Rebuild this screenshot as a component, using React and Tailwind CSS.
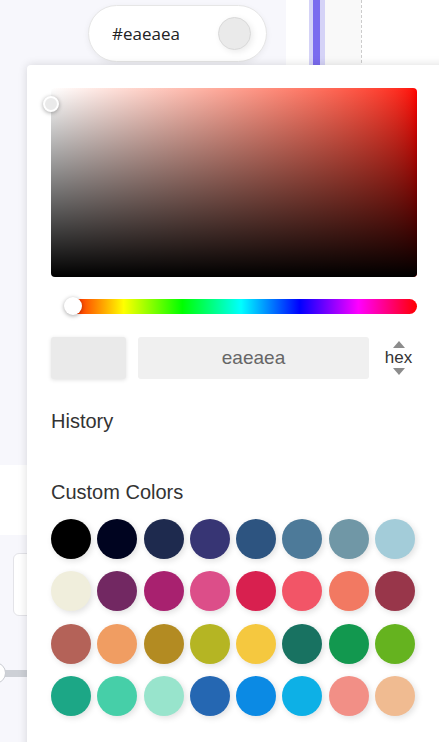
const SWATCHES = [
  '#000000', '#000420', '#1e2a4e', '#373574', '#2d5480', '#4d7a99', '#7097a6', '#a3ccd9',
  '#f0eedc', '#722862', '#a8216f', '#dc4e89', '#d8204f', '#f25567', '#f27962', '#98364a',
  '#b46258', '#f09d62', '#b38b22', '#b5b523', '#f5c83f', '#187261', '#12984f', '#65b31f',
  '#1ca786', '#46cfa8', '#98e4cc', '#2567b2', '#0b8ae4', '#0db0e6', '#f28f86', '#f0bb91',
]

function Backdrop() {
  return (
    <div className="flex h-full w-full">
      {/* settings column behind the picker */}
      <div className="flex w-[286px] flex-col bg-[#f7f7fc]">
        <div className="pl-[88px] pt-[5px]">
          <div className="flex h-[57px] w-[179px] items-center justify-between rounded-full border border-[#e6e6e6] bg-white pl-[23px] pr-[15px] shadow-[0_2px_6px_rgba(0,0,0,0.06)]">
            <span className="font-['Open_Sans'] text-[17px] text-[#222]">#eaeaea</span>
            <span className="h-[33px] w-[33px] rounded-full border border-[#d9d9d9] bg-[#eaeaea] shadow-[2px_2px_6px_rgba(0,0,0,0.08)]" />
          </div>
        </div>
        <div className="h-[403px]" />
        <div className="h-[70px] bg-white" />
        <div className="ml-[13px] mt-[18px] h-[63px] rounded-md border border-[#e3e3e8] bg-white" />
        <div className="relative mt-[54px] h-[7px] bg-[#cdd0d6]">
          <span className="absolute -left-[16px] -top-[8px] h-[22px] w-[22px] rounded-full border border-[#c8cbd1] bg-white" />
        </div>
      </div>
      <div className="w-[23px] bg-white" />
      <div className="flex w-[16px]">
        <div className="w-[4px] bg-[#d5d3f7]" />
        <div className="w-[7px] bg-[#7a6bef]" />
        <div className="w-[5px] bg-[#d5d3f7]" />
      </div>
      <div className="w-[36px] bg-[#f9f9f9]" />
      <div className="flex-1 border-l border-dashed border-[#cccccc] bg-white" />
    </div>
  )
}

function Picker() {
  return (
    <div className="absolute left-[27px] top-[65px] h-[700px] w-[440px] rounded-tl-[4px] bg-white pl-[24px] pt-[23px] font-['Liberation_Sans'] shadow-[0_0_10px_rgba(0,0,0,0.14)]">
      {/* saturation / value area */}
      <div className="relative h-[189px] w-[366px] rounded-[4px] bg-linear-to-r from-white to-[#ff0000]">
        <div className="h-full w-full rounded-[4px] bg-linear-to-t from-black to-transparent" />
        <span className="absolute -left-[8px] top-[8px] h-[16px] w-[16px] rounded-full border-2 border-white bg-[#eaeaea] shadow-[0_1px_4px_rgba(0,0,0,0.35)]" />
      </div>

      {/* hue slider */}
      <div className="relative ml-[14px] mt-[22px] h-[15px] w-[352px] rounded-full bg-[linear-gradient(to_right,#f00,#ff0,#0f0,#0ff,#00f,#f0f,#f00)]">
        <span className="absolute -left-[1px] -top-[2px] h-[18px] w-[18px] rounded-full bg-white shadow-[0_1px_4px_rgba(0,0,0,0.35)]" />
      </div>

      {/* preview + hex input */}
      <div className="mt-[23px] flex items-center">
        <div className="h-[42px] w-[75px] rounded-[3px] bg-[#eaeaea] shadow-[0_1px_4px_rgba(0,0,0,0.12)]" />
        <div className="ml-[12px] flex h-[42px] w-[231px] items-center justify-center rounded-[3px] bg-[#f0f0f0] text-[19px] text-[#666]">
          eaeaea
        </div>
        <div className="ml-[15px] flex w-[29px] flex-col items-center">
          <svg width="12" height="7" viewBox="0 0 12 7"><path d="M6 0L12 7H0z" fill="#8c8c8c" /></svg>
          <span className="text-[17px] leading-[20px] text-[#333]">hex</span>
          <svg width="12" height="7" viewBox="0 0 12 7"><path d="M0 0H12L6 7z" fill="#8c8c8c" /></svg>
        </div>
      </div>

      <div className="mt-[28px] text-[20px] leading-[28px] text-[#333]">History</div>
      <div className="mt-[43px] text-[20px] leading-[28px] text-[#333]">Custom Colors</div>

      <div className="mt-[13px] grid w-[366px] grid-cols-[repeat(8,40px)] gap-x-[6.3px] gap-y-[12.3px]">
        {SWATCHES.map((c) => (
          <span
            key={c}
            className="h-[40px] w-[40px] rounded-full shadow-[2px_2px_6px_rgba(0,0,0,0.12)]"
            style={{ backgroundColor: c }}
          />
        ))}
      </div>
    </div>
  )
}

export default function App() {
  return (
    <div className="relative h-[742px] w-[439px] overflow-hidden bg-white">
      <Backdrop />
      <Picker />
    </div>
  )
}
